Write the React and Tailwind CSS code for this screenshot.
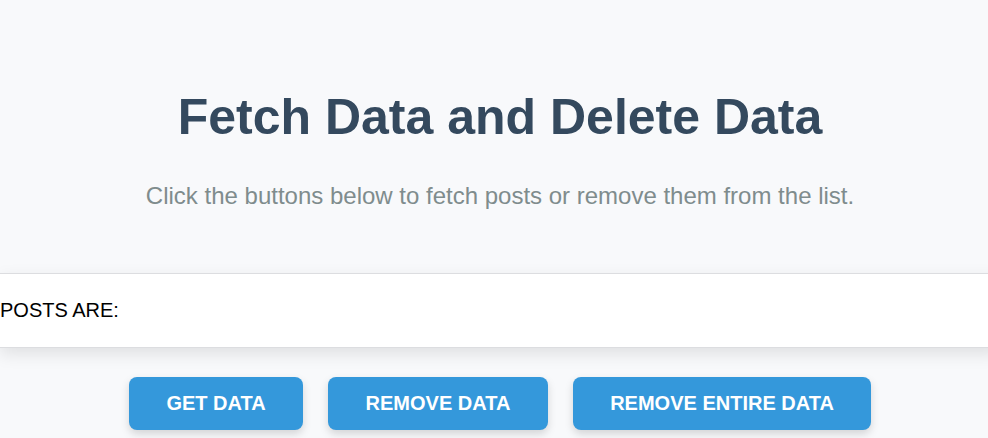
export default function App() {
  return (
    <div className="w-[1000px] min-h-screen bg-[#f8f9fb] font-['Liberation_Sans',Arial,sans-serif] pt-[88px]">
      <h1 className="text-center text-[50px] leading-[58px] font-bold text-[#34495e]">
        Fetch Data and Delete Data
      </h1>
      <p className="mt-[36px] text-center text-[24px] leading-[28px] text-[#7f8c8d]">
        Click the buttons below to fetch posts or remove them from the list.
      </p>
      <div className="mt-[63px] bg-white border-y border-[#dcdde0] pt-6 pb-[25px] shadow-[0_6px_16px_rgba(0,0,0,0.1)]">
        <p className="text-[20px] leading-[24px] text-black">POSTS ARE:</p>
      </div>
      <div className="mt-[29px] flex justify-center gap-[25px]">
        <button className="h-[53px] w-[174px] rounded-lg bg-[#3498db] text-white font-bold text-[20px] leading-[23px] shadow-[0_4px_8px_rgba(0,0,0,0.15)]">
          GET DATA
        </button>
        <button className="h-[53px] w-[220px] rounded-lg bg-[#3498db] text-white font-bold text-[20px] leading-[23px] shadow-[0_4px_8px_rgba(0,0,0,0.15)]">
          REMOVE DATA
        </button>
        <button className="h-[53px] w-[298px] rounded-lg bg-[#3498db] text-white font-bold text-[20px] leading-[23px] shadow-[0_4px_8px_rgba(0,0,0,0.15)]">
          REMOVE ENTIRE DATA
        </button>
      </div>
    </div>
  );
}
